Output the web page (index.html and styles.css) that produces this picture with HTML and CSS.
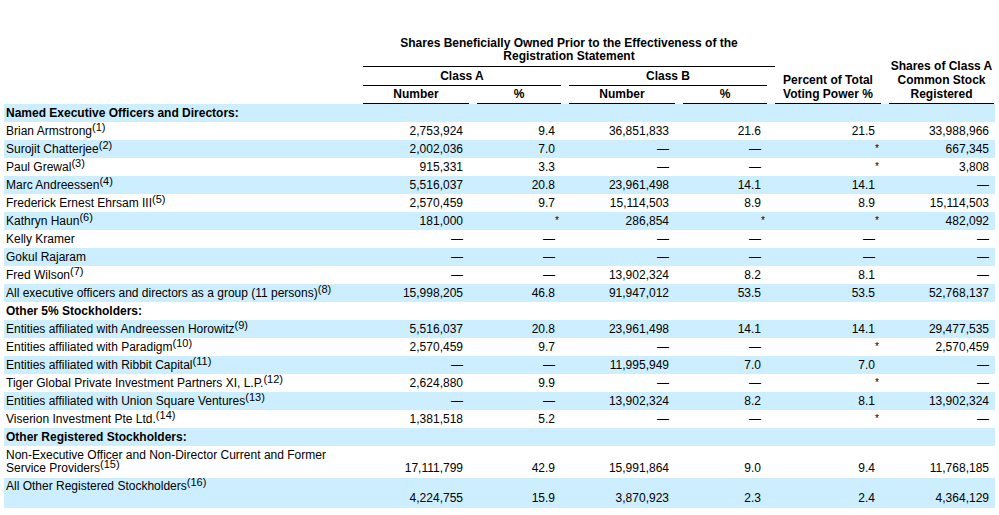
FILE: index.html
```html
<!DOCTYPE html>
<html lang="en">
<head>
<meta charset="utf-8">
<title>Beneficial Ownership Table</title>
<link rel="stylesheet" href="styles.css">
</head>
<body>
<table class="tbl">
  <colgroup>
    <col class="c-lbl">
    <col class="c-num">
    <col class="c-pct">
    <col class="c-num">
    <col class="c-pct">
    <col class="c-num">
    <col class="c-last">
  </colgroup>
  <thead>
    <tr class="h1">
      <th></th>
      <th colspan="4"><div class="u u-top">Shares Beneficially Owned Prior to the Effectiveness of the<br>Registration Statement</div></th>
      <th rowspan="3" class="side"><div class="u u-side">Percent of Total<br>Voting Power %</div></th>
      <th rowspan="3" class="side"><div class="u u-side u-end">Shares of Class A<br>Common Stock<br>Registered</div></th>
    </tr>
    <tr class="h2">
      <th></th>
      <th colspan="2"><div class="u u-mid">Class A</div></th>
      <th colspan="2"><div class="u u-mid">Class B</div></th>
    </tr>
    <tr class="h3">
      <th></th>
      <th><div class="u u-low">Number</div></th>
      <th><div class="u u-low">%</div></th>
      <th><div class="u u-low">Number</div></th>
      <th><div class="u u-low">%</div></th>
    </tr>
  </thead>
  <tbody>
    <tr class="sec"><td class="lbl">Named Executive Officers and Directors:</td><td></td><td></td><td></td><td></td><td></td><td class="last"></td></tr>
    <tr><td class="lbl">Brian Armstrong<span class="fn">(1)</span></td><td>2,753,924</td><td>9.4</td><td>36,851,833</td><td>21.6</td><td>21.5</td><td class="last">33,988,966</td></tr>
    <tr><td class="lbl">Surojit Chatterjee<span class="fn">(2)</span></td><td>2,002,036</td><td>7.0</td><td>—</td><td>—</td><td><span class="ast">*</span></td><td class="last">667,345</td></tr>
    <tr><td class="lbl">Paul Grewal<span class="fn">(3)</span></td><td>915,331</td><td>3.3</td><td>—</td><td>—</td><td><span class="ast">*</span></td><td class="last">3,808</td></tr>
    <tr><td class="lbl">Marc Andreessen<span class="fn">(4)</span></td><td>5,516,037</td><td>20.8</td><td>23,961,498</td><td>14.1</td><td>14.1</td><td class="last">—</td></tr>
    <tr><td class="lbl">Frederick Ernest Ehrsam III<span class="fn">(5)</span></td><td>2,570,459</td><td>9.7</td><td>15,114,503</td><td>8.9</td><td>8.9</td><td class="last">15,114,503</td></tr>
    <tr><td class="lbl">Kathryn Haun<span class="fn">(6)</span></td><td>181,000</td><td><span class="ast">*</span></td><td>286,854</td><td><span class="ast">*</span></td><td><span class="ast">*</span></td><td class="last">482,092</td></tr>
    <tr><td class="lbl">Kelly Kramer</td><td>—</td><td>—</td><td>—</td><td>—</td><td>—</td><td class="last">—</td></tr>
    <tr><td class="lbl">Gokul Rajaram</td><td>—</td><td>—</td><td>—</td><td>—</td><td>—</td><td class="last">—</td></tr>
    <tr><td class="lbl">Fred Wilson<span class="fn">(7)</span></td><td>—</td><td>—</td><td>13,902,324</td><td>8.2</td><td>8.1</td><td class="last">—</td></tr>
    <tr><td class="lbl">All executive officers and directors as a group (11 persons)<span class="fn">(8)</span></td><td>15,998,205</td><td>46.8</td><td>91,947,012</td><td>53.5</td><td>53.5</td><td class="last">52,768,137</td></tr>
    <tr class="sec"><td class="lbl">Other 5% Stockholders:</td><td></td><td></td><td></td><td></td><td></td><td class="last"></td></tr>
    <tr><td class="lbl">Entities affiliated with Andreessen Horowitz<span class="fn">(9)</span></td><td>5,516,037</td><td>20.8</td><td>23,961,498</td><td>14.1</td><td>14.1</td><td class="last">29,477,535</td></tr>
    <tr><td class="lbl">Entities affiliated with Paradigm<span class="fn">(10)</span></td><td>2,570,459</td><td>9.7</td><td>—</td><td>—</td><td><span class="ast">*</span></td><td class="last">2,570,459</td></tr>
    <tr><td class="lbl">Entities affiliated with Ribbit Capital<span class="fn">(11)</span></td><td>—</td><td>—</td><td>11,995,949</td><td>7.0</td><td>7.0</td><td class="last">—</td></tr>
    <tr><td class="lbl">Tiger Global Private Investment Partners XI, L.P.<span class="fn">(12)</span></td><td>2,624,880</td><td>9.9</td><td>—</td><td>—</td><td><span class="ast">*</span></td><td class="last">—</td></tr>
    <tr><td class="lbl">Entities affiliated with Union Square Ventures<span class="fn">(13)</span></td><td>—</td><td>—</td><td>13,902,324</td><td>8.2</td><td>8.1</td><td class="last">13,902,324</td></tr>
    <tr><td class="lbl">Viserion Investment Pte Ltd.<span class="fn">(14)</span></td><td>1,381,518</td><td>5.2</td><td>—</td><td>—</td><td><span class="ast">*</span></td><td class="last">—</td></tr>
    <tr class="sec"><td class="lbl">Other Registered Stockholders:</td><td></td><td></td><td></td><td></td><td></td><td class="last"></td></tr>
    <tr class="tall"><td class="lbl">Non-Executive Officer and Non-Director Current and Former Service Providers<span class="fn">(15)</span></td><td>17,111,799</td><td>42.9</td><td>15,991,864</td><td>9.0</td><td>9.4</td><td class="last">11,768,185</td></tr>
    <tr class="tall low"><td class="lbl">All Other Registered Stockholders<span class="fn">(16)</span></td><td>4,224,755</td><td>15.9</td><td>3,870,923</td><td>2.3</td><td>2.4</td><td class="last">4,364,129</td></tr>
  </tbody>
</table>
</body>
</html>
```

FILE: styles.css
```css
html, body {
  margin: 0;
  padding: 0;
  background: #ffffff;
}

body {
  font-family: "Liberation Sans", Arial, sans-serif;
  font-size: 12px;
  color: #000000;
}

.tbl {
  margin: 37px 0 0 4px;
  width: 991px;
  border-collapse: separate;
  border-spacing: 0;
  table-layout: fixed;
}

.c-lbl { width: 359px; }
.c-num { width: 114px; }
.c-pct { width: 92px; }
.c-last { width: 106px; }

thead th {
  padding: 0;
  font-weight: bold;
  text-align: center;
  vertical-align: bottom;
}

.u {
  border-bottom: 1px solid #000000;
  margin-right: 8px;
}

.u-top {
  margin-right: 0;
  line-height: 13px;
  padding-bottom: 3px;
}

.u-mid {
  line-height: 13px;
  padding: 3px 0 2px;
}

.u-low {
  line-height: 13px;
  padding: 2px 0 2px;
}

.u-side {
  line-height: 14px;
  padding-bottom: 2px;
}

.u-end {
  margin-right: 1px;
}

tbody td {
  padding: 0 14px 0 0;
  line-height: 18px;
  text-align: right;
  white-space: nowrap;
  vertical-align: middle;
}

tbody td.lbl {
  padding: 0 0 0 2px;
  text-align: left;
  white-space: normal;
}

tbody td.last {
  padding-right: 6px;
}

tbody tr:nth-child(odd) {
  background: #cceeff;
}

tr.sec td.lbl {
  font-weight: bold;
}

.fn {
  font-size: 11px;
  line-height: 0;
  vertical-align: 4px;
}

.ast {
  font-size: 10px;
  margin-right: -4px;
  vertical-align: 1px;
}

tr.tall td {
  line-height: 13px;
  padding-top: 3px;
  padding-bottom: 3px;
  vertical-align: bottom;
}

tr.tall td.lbl {
  vertical-align: top;
}

tr.low td {
  padding-top: 14px;
}

tr.low td.lbl {
  padding-top: 2px;
}
```
